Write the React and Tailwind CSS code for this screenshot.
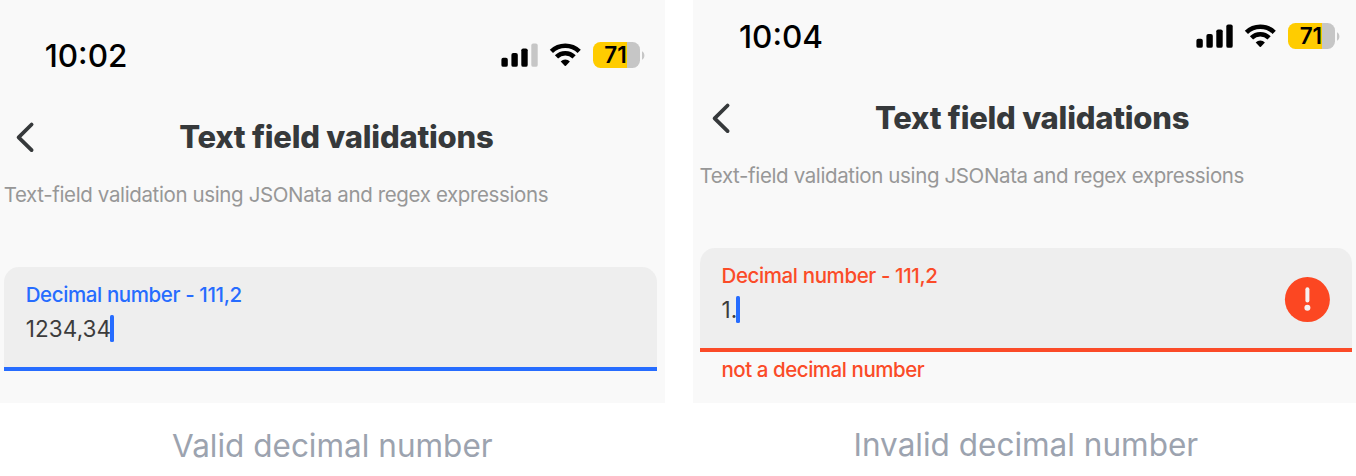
import React from "react";

function Signal({ full }) {
  return (
    <svg width="37" height="26" viewBox="0 0 37 26" className="shrink-0">
      <rect x="0.4" y="15.8" width="6.4" height="9" rx="1.9" fill="#000" />
      <rect x="10.4" y="11.1" width="6.4" height="13.7" rx="1.9" fill="#000" />
      <rect x="20.3" y="6.4" width="6.4" height="18.4" rx="1.9" fill="#000" />
      <rect x="30.3" y="1.6" width="6.4" height="23.2" rx="1.9" fill={full ? "#000" : "#c6c6c6"} />
    </svg>
  );
}

function Wifi() {
  return (
    <svg width="32" height="24" viewBox="0 0 32 24" className="shrink-0">
      <g fill="none" stroke="#000" strokeWidth="4.6">
        <path d="M2.4 8.3A20 20 0 0 1 30.2 8.3" />
        <path d="M7.5 13.9A12.6 12.6 0 0 1 25.1 13.9" />
      </g>
      <path d="M11.7 18.4A6.6 6.6 0 0 1 20.9 18.4L16.9 22.8Q16.3 23.3 15.7 22.8Z" fill="#000" />
    </svg>
  );
}

function Battery() {
  return (
    <div className="flex shrink-0 items-center gap-[2px]">
      <div className="flex h-[26px] w-[47px] items-center justify-center rounded-[7.5px] bg-[linear-gradient(to_right,#ffcc00_33.5px,#c6c6c6_33.5px)] pr-[2px] text-[22.5px] leading-[26px] font-semibold text-black">
        71
      </div>
      <svg width="3" height="9" viewBox="0 0 3 9">
        <path d="M0 0.3C3.2 1.8 3.2 7.2 0 8.7Z" fill="#c6c6c6" />
      </svg>
    </div>
  );
}

function Phone({ time, fullSignal, value, error, invalid }) {
  return (
    <div className={"h-[403px] bg-[#f9f9f9] " + (invalid ? "pt-5 pr-[4px] pl-[6.5px]" : "pt-[39px] pr-[8px] pl-[3.7px]")}>
      <div className={"flex h-8 items-center justify-between " + (invalid ? "pr-[11.6px] pl-[39.5px]" : "pr-[12px] pl-[41px]")}>
        <span className="pt-px text-[31.5px] leading-8 font-medium text-black">{time}</span>
        <div className="flex items-center">
          <Signal full={fullSignal} />
          <div className="ml-[11px] flex items-center gap-[12px]">
            <Wifi />
            <Battery />
          </div>
        </div>
      </div>
      <div className="mt-[50px] flex h-8 items-center">
        <svg width="22" height="32" viewBox="0 0 22 32" className="ml-[11px] shrink-0" fill="none" stroke="#36393b" strokeWidth="3.8" strokeLinecap="round" strokeLinejoin="round">
          <path d="M16.6 3.5L3.6 16.3L16.6 29.1" />
        </svg>
        <h1 className="ml-[142.5px] text-[31px] leading-8 font-extrabold tracking-[-0.24px] whitespace-nowrap text-[#36393b]">Text field validations</h1>
      </div>
      <p className="mt-[30px] h-6 text-[20.5px] leading-6 tracking-[-0.37px] whitespace-nowrap text-[#979797]">
        Text-field validation using JSONata and regex expressions
      </p>
      <div className="mt-[60px] flex h-[104px] justify-between rounded-t-[15px] bg-[#eeeeee] px-[22px]">
        <div className="pt-4">
          <div className={"h-6 text-[20.5px] leading-6 font-medium tracking-[-0.39px] whitespace-nowrap " + (invalid ? "text-[#fb4b28]" : "text-[#266cff]")}>Decimal number - 111,2</div>
          <div className="mt-[7px] flex h-7 items-center text-[22.5px] leading-7 tracking-[0.1px] text-[#3c3c3c]">
            <span className="pt-px">{value}</span>
            <span className="-ml-[1px] h-[27px] w-[4px] rounded-[1.5px] bg-[#266cff]" />
          </div>
        </div>
        {invalid && (
          <svg width="46" height="46" viewBox="0 0 46 46" className="mt-[29px]">
            <circle cx="23.4" cy="22.6" r="22.5" fill="#fc4722" />
            <path d="M23.4 12.3V23.6" stroke="#f7f1f0" strokeWidth="4" strokeLinecap="round" />
            <circle cx="23.4" cy="30.8" r="3" fill="#f7f1f0" />
          </svg>
        )}
      </div>
      <div className={"-mt-[4px] h-[4px] " + (invalid ? "bg-[#fb4b28]" : "bg-[#266cff]")} />
      {error && <div className="mt-[6px] h-6 pl-[22px] text-[20.5px] leading-6 font-medium tracking-[-0.46px] text-[#fb4b28]">{error}</div>}
    </div>
  );
}

export default function App() {
  return (
    <main className="flex h-[476px] w-[1356px] gap-[28px] overflow-hidden bg-white font-['Inter',sans-serif]">
      <figure className="w-[665px]">
        <Phone time="10:02" value="1234,34" />
        <figcaption className="mt-[23px] h-10 pl-[172px] text-[31.5px] leading-10 whitespace-nowrap text-[#9ca3af]">Valid decimal number</figcaption>
      </figure>
      <figure className="w-[663px]">
        <Phone time="10:04" value="1." fullSignal invalid error="not a decimal number" />
        <figcaption className="mt-[22px] h-10 pl-[160.5px] text-[31.5px] leading-10 whitespace-nowrap text-[#9ca3af]">Invalid decimal number</figcaption>
      </figure>
    </main>
  );
}
